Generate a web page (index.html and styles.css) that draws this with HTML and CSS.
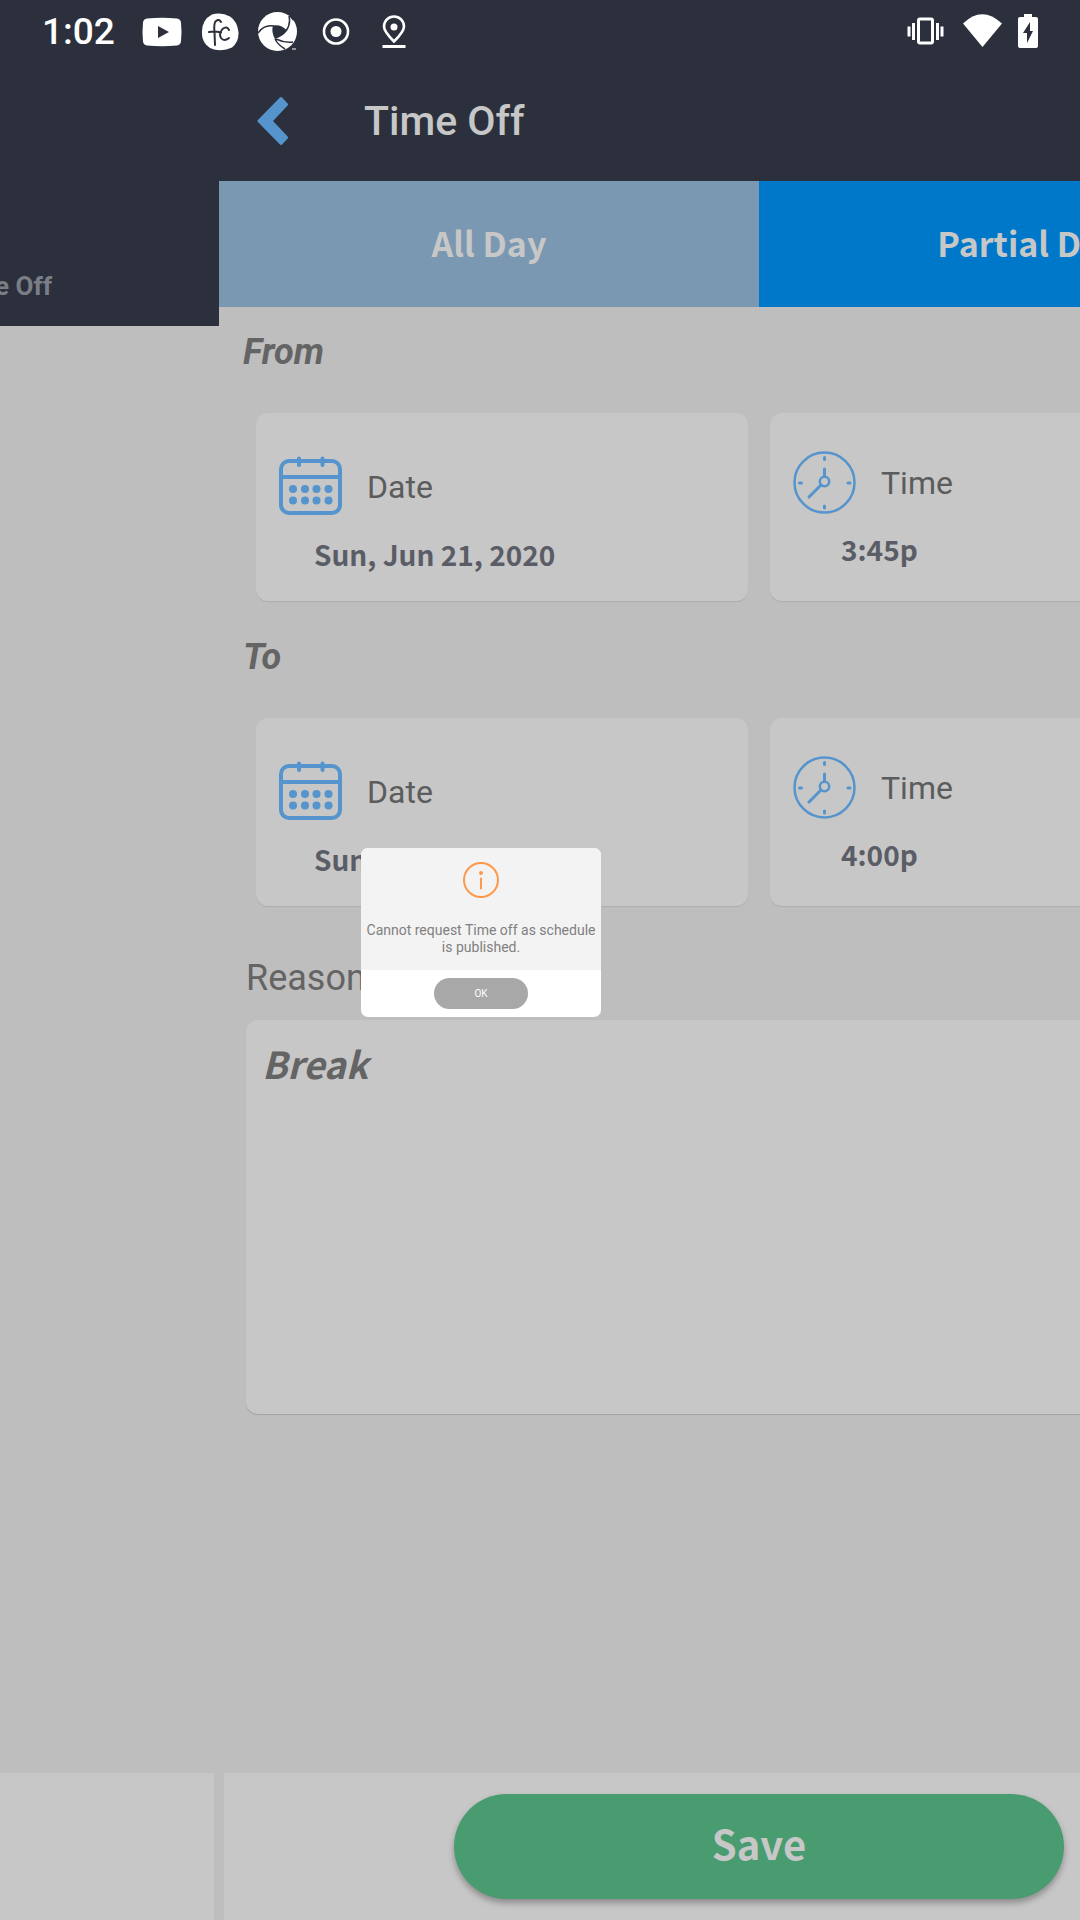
FILE: index.html
```html
<!DOCTYPE html>
<html lang="en">
<head>
<meta charset="utf-8">
<meta name="viewport" content="width=device-width, initial-scale=1">
<title>Time Off</title>
<link rel="stylesheet" href="styles.css">
</head>
<body>
<svg class="defs" aria-hidden="true">
  <symbol id="calendar" viewBox="0 0 64 64">
    <g fill="none" stroke="currentColor" stroke-width="4" stroke-linecap="round">
      <rect x="2" y="6" width="59" height="52" rx="8"/>
      <path d="M2 22H61M20 3.500V10M43.500 3.500V10"/>
    </g>
    <g fill="currentColor">
      <circle cx="14" cy="34" r="4"/><circle cx="26" cy="34" r="4"/><circle cx="37.500" cy="34" r="4"/><circle cx="49.500" cy="34" r="4"/>
      <circle cx="14" cy="45.500" r="4"/><circle cx="26" cy="45.500" r="4"/><circle cx="37.500" cy="45.500" r="4"/><circle cx="49.500" cy="45.500" r="4"/>
    </g>
  </symbol>
  <symbol id="clock" viewBox="0 0 64 64">
    <g fill="none" stroke="currentColor" stroke-width="2.500" stroke-linecap="round">
      <circle cx="31.500" cy="31.500" r="30"/>
      <circle cx="31.500" cy="30.500" r="4.700"/>
      <path stroke-width="3" d="M31.500 25.500V18M28 34L16 46M31.500 6.500V8.500M31.500 55V57M6.500 32H8.500M55 32H57"/>
    </g>
  </symbol>
</svg>

<header class="status">
  <span class="status-time">1:02</span>
  <svg class="status-icon" viewBox="0 0 40 40"><path fill="#fff" fill-rule="evenodd" d="M5 6.500Q20 5 35 6.500Q38.500 7 39 10.500Q40 20 39 29.500Q38.500 33 35 33.500Q20 35 5 33.500Q1.500 33 1 29.500Q0 20 1 10.500Q1.500 7 5 6.500ZM16 14V26L27 20Z"/></svg>
  <svg class="status-icon" viewBox="0 0 40 40"><path fill="#fff" d="M12 2.500Q21-.500 30 4.500Q37 9 38.500 20Q39 30 32 35.500Q24 39.500 14 37.500Q5 35 2.500 26Q-.500 9 12 2.500Z"/><g fill="none" stroke="#2b303c" stroke-width="2" stroke-linecap="round"><path d="M21 10Q19 6.500 16 9Q13.500 11 14.500 20L15 33M9 20Q15 19 21 20.500"/><path d="M29 18Q27 13.500 22.500 17Q18.500 22 21 26Q24 30 29 26"/></g></svg>
  <svg class="status-icon" viewBox="0 0 40 40"><circle cx="19.500" cy="19.500" r="19.500" fill="#fff"/><path fill="#2b303c" d="M15 13.500Q23 12 29 18.500Q26 24 17 27Q13 20 15 13.500Z"/><g fill="none" stroke="#2b303c" stroke-width="1.500"><path d="M0 21Q6 12 16 14M28 19Q33 12 31 4M17 27Q20 33 27 37M18 27Q26 31 35 30"/></g><path stroke="#2b303c" stroke-width="2.500" d="M32 3L36 8"/><path stroke="#fff" d="M34 37H38"/></svg>
  <svg class="status-icon" viewBox="0 0 40 40"><circle cx="20" cy="19.500" r="12" fill="none" stroke="#fff" stroke-width="2.600"/><circle cx="20" cy="19.500" r="5.500" fill="#fff"/></svg>
  <svg class="status-icon" viewBox="0 0 40 40"><path fill="none" stroke="#fff" stroke-width="2.600" d="M20 29.500C13 22.500 10 18.500 10 14.500A10 10 0 0 1 30 14.500C30 18.500 27 22.500 20 29.500Z"/><circle cx="20" cy="15" r="3.500" fill="#fff"/><path stroke="#fff" stroke-width="3" d="M8.500 34.500H31.500"/></svg>
  <div class="status-system">
    <svg class="status-icon" viewBox="0 0 40 40"><g fill="none" stroke="#fff" stroke-width="3"><rect x="12.500" y="7" width="14" height="24" rx="1.500"/><path d="M7.500 11V28M3 14.500V24.500M31.500 11V28M36 14.500V24.500"/></g></svg>
    <svg class="status-icon" viewBox="0 0 40 40"><path fill="#fff" d="M1 11.500Q20-7 40 11.500L20.500 35Z"/></svg>
    <svg class="status-battery" viewBox="0 0 20 40"><path fill="#fff" fill-rule="evenodd" d="M6 2H14V5H18Q20 5 20 7V34Q20 36 18 36H2Q0 36 0 34V7Q0 5 2 5H6ZM12 10L5 21H9V31L15 19H12Z"/></svg>
  </div>
</header>

<div class="screens">
  <aside class="previous">
    <div class="previous-top"><span class="previous-title">Time Off</span></div>
    <div class="previous-body"></div>
    <div class="previous-foot"></div>
  </aside>

  <main class="screen">
    <div class="bar">
      <button class="back" type="button" aria-label="Back"><svg viewBox="0 0 32 50"><path fill="#5594cc" stroke="#5594cc" stroke-width="3" stroke-linejoin="round" d="M24 2.500L29.500 8.500L14 25L29.500 41.500L24 47.500L2 25Z"/></svg></button>
      <h1 class="title">Time Off</h1>
    </div>
    <nav class="tabs">
      <button class="tab" type="button">All Day</button>
      <button class="tab tab-active" type="button">Partial Day</button>
    </nav>

    <form class="form">
      <section class="period">
        <h2 class="heading">From</h2>
        <div class="cards">
          <button class="card" type="button">
            <span class="card-row"><svg class="card-icon"><use href="#calendar"/></svg><span class="card-label">Date</span></span>
            <span class="card-value">Sun, Jun 21, 2020</span>
          </button>
          <button class="card card-time" type="button">
            <span class="card-row"><svg class="card-icon"><use href="#clock"/></svg><span class="card-label">Time</span></span>
            <span class="card-value">3:45p</span>
          </button>
        </div>
      </section>
      <section class="period">
        <h2 class="heading">To</h2>
        <div class="cards">
          <button class="card" type="button">
            <span class="card-row"><svg class="card-icon"><use href="#calendar"/></svg><span class="card-label">Date</span></span>
            <span class="card-value">Sun, Jun 21, 2020</span>
          </button>
          <button class="card card-time" type="button">
            <span class="card-row"><svg class="card-icon"><use href="#clock"/></svg><span class="card-label">Time</span></span>
            <span class="card-value">4:00p</span>
          </button>
        </div>
      </section>
      <div class="reason">
        <label class="reason-label" for="reason">Reason</label>
        <textarea class="reason-text" id="reason" spellcheck="false">Break</textarea>
      </div>
    </form>

    <footer class="foot"><button class="save" type="button">Save</button></footer>
  </main>
</div>

<div class="dialog" role="alertdialog" aria-labelledby="message">
  <div class="dialog-body">
    <svg class="dialog-icon" viewBox="0 0 36 36"><circle cx="18" cy="18" r="17" fill="none" stroke="#ff984a" stroke-width="2"/><circle cx="18" cy="11" r="2" fill="#ff984a"/><path stroke="#ff984a" stroke-width="2" stroke-linecap="round" d="M18 16.500V26.500"/></svg>
    <p class="dialog-text" id="message">Cannot request Time off as schedule is published.</p>
  </div>
  <div class="dialog-foot"><button class="ok" type="button">OK</button></div>
</div>
</body>
</html>
```

FILE: styles.css
```css
* {
  box-sizing: border-box;
}

:root {
  --dark: #2b303c;
  --page: #bebebe;
  --panel: #c7c7c7;
  --blue: #5594cc;
  --source: "Noto Sans CJK SC", "Open Sans", sans-serif;
}

body {
  margin: 0;
  min-height: 100vh;
  display: flex;
  flex-direction: column;
  position: relative;
  overflow-x: hidden;
  background: var(--page);
  font-family: Roboto, sans-serif;
}

button {
  border: 0;
  padding: 0;
  background: none;
  font: inherit;
  color: inherit;
  cursor: pointer;
}

.defs {
  position: absolute;
  width: 0;
  height: 0;
}

/* Status bar */
.status {
  display: flex;
  align-items: center;
  gap: 18px;
  height: 64px;
  padding: 0 42px;
  background: var(--dark);
}

.status-time {
  width: 82px;
  color: #fff;
  font-size: 37px;
  font-weight: 500;
  line-height: 40px;
}

.status-icon {
  width: 40px;
  height: 40px;
}

.status-battery {
  width: 20px;
  height: 40px;
}

.status-system {
  flex: 1;
  display: flex;
  justify-content: flex-end;
  gap: 16px;
}

/* The outgoing screen and the incoming one, side by side */
.screens {
  flex: 1;
  display: flex;
  overflow: hidden;
}

.previous {
  flex: 0 0 219px;
  min-width: 0;
  display: flex;
  flex-direction: column;
}

.previous-top {
  height: 262px;
  padding: 204px 167px 0 0;
  display: flex;
  justify-content: flex-end;
  background: var(--dark);
}

.previous-title {
  flex: none;
  color: #7b7e86;
  font-size: 26px;
  font-weight: 700;
  line-height: 36px;
}

.previous-body {
  flex: 1;
}

.previous-foot {
  height: 147px;
  margin-right: 5px;
  background: var(--panel);
}

.screen {
  flex: 0 0 100%;
  display: flex;
  flex-direction: column;
}

.bar {
  display: flex;
  align-items: center;
  gap: 75px;
  height: 117px;
  padding: 0 38px 4px;
  background: var(--dark);
}

.back {
  width: 32px;
  height: 50px;
}

.back svg {
  display: block;
}

.title {
  margin: 0;
  color: var(--panel);
  font-size: 41px;
  font-weight: 500;
  line-height: 48px;
}

.tabs {
  display: grid;
  grid-template-columns: 1fr 1fr;
  height: 126px;
}

.tab {
  padding-bottom: 4px;
  background: #7b98b3;
  color: var(--panel);
  font-family: var(--source);
  font-size: 34px;
  font-weight: 700;
}

.tab-active {
  background: #0078ca;
}

/* Form */
.form {
  flex: 1;
}

.period {
  padding: 25px 37px 11px;
}

.heading {
  margin: 0 0 41px -13px;
  color: #646464;
  font-size: 36px;
  font-weight: 700;
  font-style: italic;
  line-height: 40px;
}

.cards {
  display: grid;
  grid-template-columns: 1fr 1fr;
  gap: 22px;
}

.card {
  display: flex;
  flex-direction: column;
  gap: 17px;
  height: 188px;
  padding: 42px 23px 0;
  border-radius: 12px;
  background: var(--panel);
  box-shadow: 0 1px 1px #adadad;
  text-align: left;
}

.card-time {
  gap: 16px;
  padding-top: 38px;
}

.card-row {
  display: flex;
  align-items: center;
  gap: 24px;
}

.card-icon {
  width: 64px;
  height: 64px;
  color: var(--blue);
}

.card-label {
  color: #5c5c5c;
  font-size: 32px;
  line-height: 40px;
}

.card-value {
  padding-left: 35px;
  color: #5a5d65;
  font-family: var(--source);
  font-size: 28px;
  font-weight: 700;
  line-height: 36px;
}

.card-time .card-value {
  padding-left: 48px;
}

.reason {
  display: flex;
  flex-direction: column;
  gap: 22px;
  padding: 41px 27px 0;
}

.reason-label {
  color: #646464;
  font-size: 36px;
  line-height: 40px;
}

.reason-text {
  height: 394px;
  padding: 19px 16px;
  border: 0;
  border-radius: 12px;
  outline: 0;
  resize: none;
  background: var(--panel);
  box-shadow: 0 1px 1px #a0a0a0;
  color: #646464;
  font-family: var(--source);
  font-size: 37px;
  font-weight: 700;
  font-style: italic;
  line-height: 48px;
}

.foot {
  display: flex;
  justify-content: center;
  height: 147px;
  margin: 0 5px;
  padding: 21px 0;
  background: var(--panel);
}

.save {
  width: 57%;
  padding-bottom: 8px;
  border-radius: 53px;
  background: #499c70;
  box-shadow: 0 4px 6px #8c8c8c;
  color: var(--panel);
  font-family: var(--source);
  font-size: 40px;
  font-weight: 700;
}

/* Alert */
.dialog {
  position: absolute;
  top: 848px;
  left: 361px;
  width: 240px;
  overflow: hidden;
  border-radius: 7px;
  background: #fff;
}

.dialog-body {
  display: flex;
  flex-direction: column;
  align-items: center;
  gap: 24px;
  padding: 14px 2px 14px;
  background: #f3f3f3;
}

.dialog-icon {
  width: 36px;
  height: 36px;
}

.dialog-text {
  margin: 0;
  color: #808080;
  font-size: 14px;
  line-height: 17px;
  text-align: center;
}

.dialog-foot {
  display: flex;
  justify-content: center;
  padding: 8px;
}

.ok {
  width: 94px;
  height: 31px;
  border-radius: 16px;
  background: #a8a8a8;
  color: #fff;
  font-size: 10px;
}
```
